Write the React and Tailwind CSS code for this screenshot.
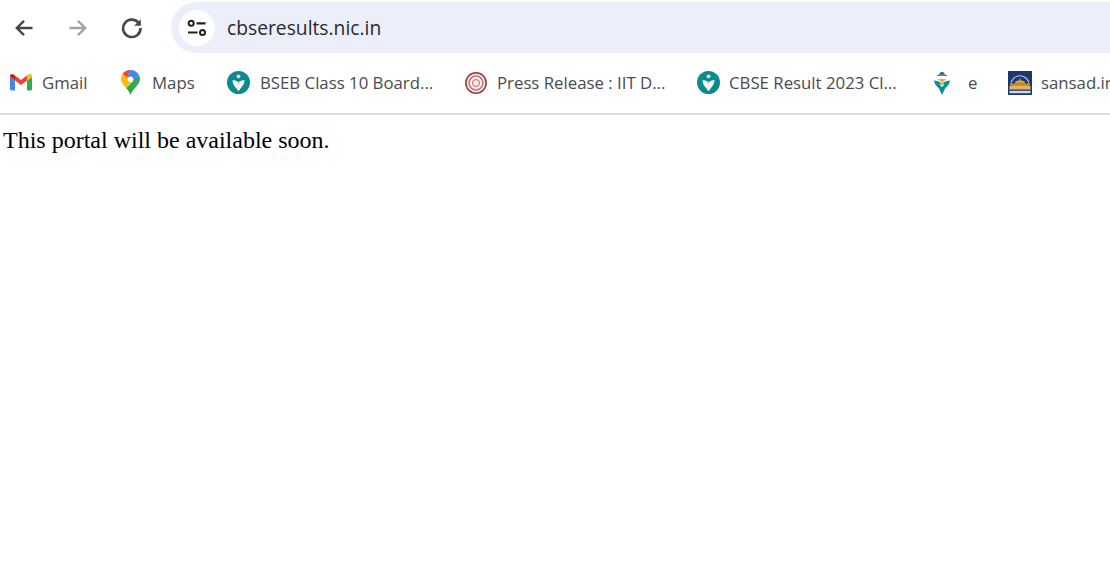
const ui = { fontFamily: '"Open Sans","Noto Sans",sans-serif' };

function Gmail() {
  return (
    <svg width="22" height="17" viewBox="0 0 22 17" className="block">
      <path d="M1.500 16.500A1.500 1.500 0 0 1 0 15V3l5 3.600v9.900z" fill="#4285f4" />
      <path d="M17 16.500V6.600L22 3v12a1.500 1.500 0 0 1-1.500 1.500z" fill="#34a853" />
      <path d="M17 1.600v5L22 3V2.200C22 .4 20-.5 18.600.5z" fill="#fbbc04" />
      <path d="M5 6.600V1.600L11 6l6-4.400v5L11 11z" fill="#ea4335" />
      <path d="M0 2.200V3l5 3.600v-5L3.400.5C2-.5 0 .4 0 2.200z" fill="#c5221f" />
    </svg>
  );
}

function Maps() {
  return (
    <svg width="19" height="25" viewBox="0 0 19 25" className="block">
      <path d="M5 18c1.800 2.100 3.500 4.200 4.500 7 1-2.800 2.700-4.900 4.500-7 2.500-3 5-5.500 5-8.800 0-1.500-.4-3-1-4.200L5 18z" fill="#34a853" />
      <path d="M1.700 4C.7 5.300 0 7.100 0 9.300c0 3.300 2.500 5.800 5 8.700l6-7z" fill="#fbbc04" />
      <path d="M1.700 4A9.400 9.400 0 0 1 9.500 0L6 7.500z" fill="#ea4335" />
      <path d="M9.500 0c3.700 0 6.900 2 8.500 5l-5.500 6.500L6 7.500z" fill="#4285f4" />
      <circle cx="9.500" cy="9.300" r="2.800" fill="#fff" />
    </svg>
  );
}

function Digi({ size = 23 }) {
  return (
    <svg width={size} height={size} viewBox="0 0 23 23" className="block">
      <circle cx="11.500" cy="11.500" r="11.500" fill="#0b8a8f" />
      <circle cx="11.500" cy="5.300" r="1.900" fill="#e8f4f2" />
      <path d="M5.500 9.300c2.300 0 4.800.5 6 2.300 1.200-1.800 3.700-2.300 6-2.300 0 3-1.600 5.400-3 7l-3 4-3-4c-1.400-1.600-3-4-3-7z" fill="#f5faf7" />
      <path d="M10 11.300c.7.300 1.200.8 1.500 1.400.3-.6.800-1.100 1.500-1.400.2 1.300-.5 2.400-1.500 3.200-1-.8-1.700-1.900-1.500-3.200z" fill="#e9dfa8" />
    </svg>
  );
}

function Iit() {
  return (
    <svg width="22" height="22" viewBox="0 0 22 22" className="block">
      <circle cx="11" cy="11" r="10.200" fill="#f6dfdc" stroke="#96393f" strokeWidth="1.500" />
      <circle cx="11" cy="11" r="6.900" fill="#fbf1ef" stroke="#c27a7c" strokeWidth="1.500" />
      <circle cx="11" cy="11" r="3.500" fill="#f7e6e4" stroke="#b8686b" strokeWidth="1" />
    </svg>
  );
}

function E() {
  return (
    <svg width="16" height="24" viewBox="0 0 16 24" className="block">
      <path d="M5 3.800c.3-1.600 1.500-2.800 3-2.800s2.700 1.200 3 2.800z" fill="#146f74" />
      <rect x="3" y="3.800" width="10" height="1" fill="#146f74" />
      <path d="M0 9.500c2.500 0 5.500.7 8 3.300 2.500-2.600 5.500-3.300 8-3.300-.3 3.300-2.300 5.600-4.500 7.300L8 24l-3.500-7.200C2.300 15.100.3 12.800 0 9.500z" fill="#0e8f98" />
      <path d="M3.500 8.500C5 7.500 11 7.500 12.500 8.500 11 9.500 9 10.500 8 12 7 10.500 5 9.500 3.500 8.500z" fill="#e6b344" />
      <path d="M5.700 12.300c1 .4 1.800 1 2.300 1.800.5-.8 1.300-1.400 2.300-1.800-.2 1.500-1.100 2.700-2.300 3.700-1.200-1-2.100-2.200-2.300-3.700z" fill="#fdfaf0" />
    </svg>
  );
}

function Sansad() {
  return (
    <svg width="24" height="24" viewBox="0 0 24 24" className="block">
      <rect width="24" height="24" fill="#1c3a6e" />
      <path d="M2.800 14a9.200 9.200 0 0 1 18.400 0" fill="none" stroke="#b5cbe3" strokeWidth="1.100" />
      <rect x="11.500" y="7.500" width="1" height="2" fill="#d9b465" />
      <path d="M6.500 12.500c.5-2.200 2.800-3.300 5.500-3.300s5 1.100 5.500 3.300z" fill="#d9a13c" />
      <rect x="2.500" y="12.500" width="19" height="2.500" fill="#c88f32" />
      <rect x="1.500" y="15" width="21" height="3.500" fill="#e0b55c" />
      <rect x="1.500" y="19.800" width="21" height="2.400" fill="#cfd7e4" />
    </svg>
  );
}

const bookmarks = [
  { icon: <Gmail />, box: "w-[22px] ml-[10px]", gap: "ml-[10px]", label: "Gmail", w: "w-[47px]" },
  { icon: <Maps />, box: "w-[19px] ml-[32px]", gap: "ml-[12px]", label: "Maps", w: "w-[44px]" },
  { icon: <Digi />, box: "w-[23px] ml-[31px]", gap: "ml-[10px]", label: "BSEB Class 10 Board...", w: "w-[174px]" },
  { icon: <Iit />, box: "w-[22px] ml-[31px]", gap: "ml-[10px]", label: "Press Release : IIT D...", w: "w-[170px]" },
  { icon: <Digi />, box: "w-[23px] ml-[30px]", gap: "ml-[9px]", label: "CBSE Result 2023 Cl...", w: "w-[172px]" },
  { icon: <E />, box: "w-[16px] ml-[33px]", gap: "ml-[18px]", label: "e", w: "w-[10px]" },
  { icon: <Sansad />, box: "w-[24px] ml-[30px]", gap: "ml-[9px]", label: "sansad.in", w: "w-[80px]" },
];

export default function App() {
  return (
    <div className="w-[1110px] h-[580px] bg-white overflow-hidden flex flex-col">
      <div style={ui} className="h-[113px] shrink-0 flex flex-col">
        <div className="h-[55px] pt-[2px] flex items-start shrink-0">
          <div className="w-[171px] h-[51px] flex items-center shrink-0">
            <svg width="20" height="20" viewBox="0 0 20 20" fill="none" className="ml-[14px]">
              <path d="M18.500 10H3M10 2.800 2.800 10l7.200 7.200" stroke="#474747" strokeWidth="2.400" />
            </svg>
            <svg width="20" height="20" viewBox="0 0 20 20" fill="none" className="ml-[34px]">
              <path d="M1.500 10H17M10 2.800l7.200 7.200-7.200 7.200" stroke="#a3a3a3" strokeWidth="2.400" />
            </svg>
            <svg width="22" height="22" viewBox="0 0 22 22" fill="none" className="ml-[33px]">
              <path d="M17.700 6A8.700 8.700 0 1 0 19.500 11" stroke="#474747" strokeWidth="2.600" />
              <path d="M19.800 2.200v6.600h-6.600z" fill="#474747" />
            </svg>
          </div>
          <div className="flex-1 h-[51px] bg-[#ebeff9] rounded-l-[26px] flex items-center">
            <div className="w-[36px] h-[36px] ml-[8px] rounded-full bg-white flex items-center justify-center shrink-0">
              <svg width="20" height="18" viewBox="0 0 20 18" fill="none">
                <circle cx="4.200" cy="4.300" r="2.500" stroke="#202124" strokeWidth="2" />
                <path d="M9.500 4.300h9M1 13.500h9.500" stroke="#202124" strokeWidth="2.200" />
                <circle cx="15.500" cy="13.500" r="2.500" stroke="#202124" strokeWidth="2" />
              </svg>
            </div>
            <span className="ml-[12px] text-[19.250px] leading-[26px] text-[#2a2b2e] whitespace-nowrap">cbseresults.nic.in</span>
          </div>
        </div>
        <div className="flex-1 flex items-center pb-[3px] overflow-hidden">
          {bookmarks.map((b) => (
            <div key={b.label} className="flex items-center shrink-0">
              <div className={`${b.box} flex justify-center shrink-0`}>{b.icon}</div>
              <span className={`${b.gap} ${b.w} text-[16.800px] leading-[24px] text-[#474b50] whitespace-nowrap`}>{b.label}</span>
            </div>
          ))}
        </div>
      </div>
      <div className="h-[2px] bg-[#dedede] shrink-0" />
      <p className="pl-[3px] pt-[10px] text-[24px] leading-[30px] text-black" style={{ fontFamily: '"Liberation Serif",serif' }}>
        This portal will be available soon.
      </p>
    </div>
  );
}
